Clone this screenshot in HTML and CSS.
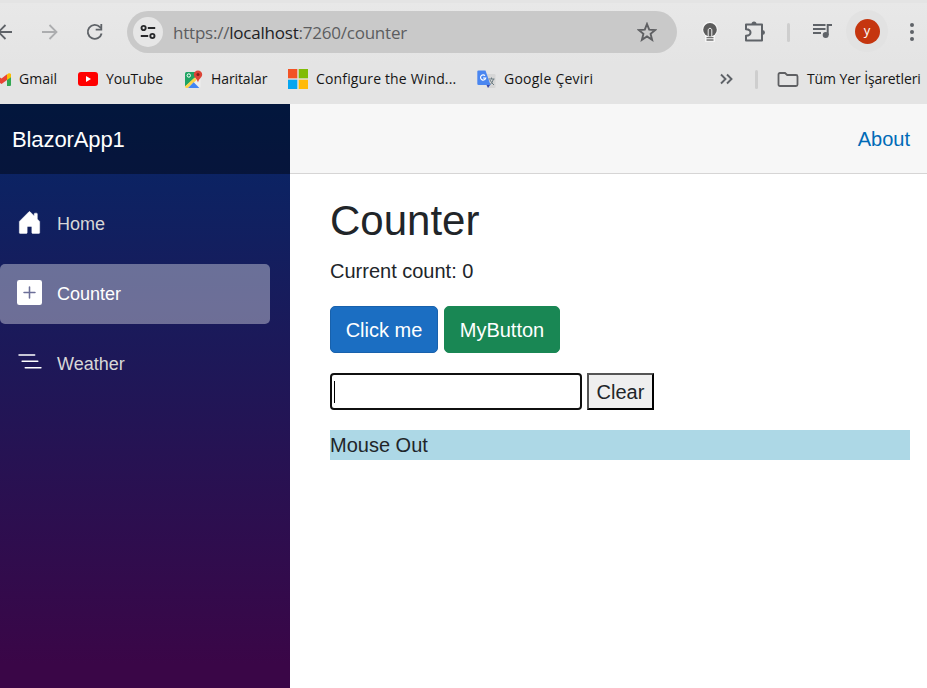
FILE: index.html
```html
<!DOCTYPE html>
<html lang="tr">
<head>
<meta charset="utf-8">
<title>Counter</title>
<link rel="stylesheet" href="styles.css">
</head>
<body>
<header class="browser">
  <div class="toolbar">
    <svg class="back" width="12" height="20" viewBox="0 0 12 20" fill="none" stroke="#5f6368" stroke-width="1.8"><path d="M12 10H-1M5.500 3L-1.500 10l7 7"/></svg>
    <svg class="forward" width="18" height="20" viewBox="0 0 18 20" fill="none" stroke="#acadaf" stroke-width="1.8"><path d="M1 10h14.500M8.500 3l7 7-7 7"/></svg>
    <svg class="reload" width="18" height="18" viewBox="0 0 18 18"><path d="M15.600 10.500A7 7 0 1 1 14 4.200l1 1" fill="none" stroke="#5f6368" stroke-width="1.900"/><path d="M16.200 1v6.500H9.700V5.700h4.700V1z" fill="#5f6368"/></svg>
    <div class="address">
      <span class="site-info"><svg width="16" height="16" viewBox="0 0 16 16" fill="none" stroke="#27282a" stroke-width="1.900"><circle cx="3.600" cy="4" r="2.100"/><path d="M7.800 4h7.400M.8 12h7.400"/><circle cx="12.400" cy="12" r="2.100"/></svg></span>
      <span class="url">https://<b>localhost</b>:7260/counter</span>
      <svg class="star" width="20" height="20" viewBox="0 0 20 20"><path d="M10 2l2.200 5.600 6 .4-4.600 3.900 1.500 5.900L10 14.500l-5.100 3.300 1.500-5.900L1.800 8l6-.4z" fill="none" stroke="#5f6063" stroke-width="1.900"/></svg>
    </div>
    <svg class="bulb" width="18" height="22" viewBox="0 0 18 22"><path d="M9 1.500a7 7 0 0 0-4.200 12.600v6h8.400v-6A7 7 0 0 0 9 1.500z" fill="#f7f7f7" stroke="#f7f7f7" stroke-width="1.500"/><circle cx="9" cy="8.700" r="6.800" fill="#5c5c5c"/><path d="M7.200 15V8.500Q9 5.500 10.800 8.500V15" fill="none" stroke="#f2f2f2"/><path d="M5.500 16.700h7M5.500 19h7" stroke="#737373" stroke-width="1.300"/></svg>
    <svg class="puzzle" width="22" height="22" viewBox="0 0 22 22"><path d="M2 3.500h16v16H2v-4.700q4.500-.2 4.500-3.300T2 8.200z" fill="none" stroke="#5f6368" stroke-width="2" stroke-linejoin="round"/><path d="M7.500 3a2.500 2.500 0 0 1 5 0zM18.500 9a2.500 2.500 0 0 1 0 5z" fill="#5f6368"/></svg>
    <i class="divider toolbar-divider"></i>
    <svg class="queue" width="20" height="18" viewBox="0 0 20 18"><path d="M0 3h12.500M0 7h12.500M0 11h8" stroke="#5f6368" stroke-width="1.900"/><path d="M14.700 13V3H19" fill="none" stroke="#5f6368" stroke-width="2"/><circle cx="12.700" cy="13" r="3" fill="#5f6368"/></svg>
    <span class="profile"><span class="avatar">y</span></span>
    <svg class="more" width="6" height="20" viewBox="0 0 6 20" fill="#5f6368"><circle cx="3" cy="3" r="2"/><circle cx="3" cy="10" r="2"/><circle cx="3" cy="17" r="2"/></svg>
  </div>
  <nav class="bookmarks">
    <a class="bookmark gmail"><svg width="11" height="15" viewBox="0 0 11 15"><path d="M-6 1.500L1.500 6.500 7 2.300V8L1.500 12-6 7z" fill="#ea4335"/><path d="M7 5v9h3q1 0 1-1V4z" fill="#34a853"/><path d="M7 8V2.600Q9 .2 11 2V5.200z" fill="#fbbc04"/></svg><span>Gmail</span></a>
    <a class="bookmark youtube"><svg width="20" height="14" viewBox="0 0 20 14"><rect width="20" height="14" rx="3" fill="#f00"/><path d="M8 4v6l5-3z" fill="#fff"/></svg><span>YouTube</span></a>
    <a class="bookmark maps"><svg width="19" height="19" viewBox="0 0 19 19"><path d="M2 2H12l4.500 6v8.500q0 1.500-1.500 1.500H2.500Q1 18 1 16.500v-13Q1 2 2 2z" fill="#eee"/><path d="M2.500 2H11v6L1 16.500v-13Q1 2 2.500 2z" fill="#1fa463"/><path d="M1 16.500L10.500 7.500l2.300 2.200L4 18H2.500Q1 18 1 16.500z" fill="#fdd44b"/><path d="M4 18L9.700 12.300 15.400 18z" fill="#4285f4"/><circle cx="4.800" cy="5.500" r="1.700" fill="none" stroke="#fff"/><path d="M14 .4a4.200 4.200 0 0 0-4.200 4.200c0 3 3.500 4 4.200 8 .7-4 4.200-5 4.200-8A4.200 4.200 0 0 0 14 .4z" fill="#dc4437"/><circle cx="14" cy="4.600" r="1.500" fill="#7e231b"/></svg><span>Haritalar</span></a>
    <a class="bookmark windows"><svg width="20" height="20" viewBox="0 0 20 20"><path d="M0 0h9.300v9.300H0z" fill="#f35325"/><path d="M10.700 0H20v9.300h-9.300z" fill="#81bc06"/><path d="M0 10.700h9.300V20H0z" fill="#05a6f0"/><path d="M10.700 10.700H20V20h-9.300z" fill="#ffba08"/></svg><span>Configure the Wind...</span></a>
    <a class="bookmark translate"><svg width="19" height="19" viewBox="0 0 19 19"><path d="M7 4h10.200q1.300 0 1.300 1.300v11.400q0 1.300-1.300 1.300H11z" fill="#d6d6d6"/><path d="M11.500 9h6M14.500 7.500V9m2 0q-1 4-4 6m.5-5q1.500 3 4 5" fill="none" stroke="#6c7c82"/><path d="M9.500 15h3.600L11 18z" fill="#3749ab"/><path d="M1.500.5h7l5 14.500h-12Q.3 15 .3 13.700v-12Q.3.5 1.500.5z" fill="#4a86f0"/><path d="M8 5.600A2.600 2.600 0 1 0 8.700 8H6" fill="none" stroke="#fff" stroke-width="1.200"/></svg><span>Google Çeviri</span></a>
    <svg class="overflow" width="13" height="12" viewBox="0 0 13 12" fill="none" stroke="#5f6368" stroke-width="1.900"><path d="M1 1.500L5.500 6 1 10.500M7 1.500L11.500 6 7 10.500"/></svg>
    <i class="divider"></i>
    <a class="bookmark all"><svg width="22" height="17" viewBox="0 0 22 17"><path d="M3 2h5l2.200 2H19q1.500 0 1.500 1.500v8Q20.500 15 19 15H3q-1.500 0-1.500-1.500v-10Q1.500 2 3 2z" fill="none" stroke="#5f6063" stroke-width="1.800"/></svg><span>Tüm Yer İşaretleri</span></a>
  </nav>
</header>
<div class="page">
  <aside class="sidebar">
    <div class="brand">BlazorApp1</div>
    <nav class="menu">
      <a class="item"><svg width="25" height="25" viewBox="0 0 16 16" fill="#fff"><path d="M6.500 14.500v-3.505c0-.245.25-.495.5-.495h2c.25 0 .5.250.5.500v3.500a.5.500 0 0 0 .5.500h4a.5.500 0 0 0 .5-.5v-7a.5.500 0 0 0-.146-.354L13 5.793V2.500a.5.500 0 0 0-.5-.5h-1a.5.500 0 0 0-.5.500v1.293L8.354 1.146a.5.500 0 0 0-.708 0l-6 6A.5.500 0 0 0 1.500 7.500v7a.5.500 0 0 0 .5.500h4a.5.500 0 0 0 .5-.5Z" stroke="#fff" stroke-width=".3"/></svg><span>Home</span></a>
      <a class="item active"><svg width="25" height="25" viewBox="0 0 16 16" fill="#fff"><path d="M1.500 0A1.500 1.500 0 0 0 0 1.500v13A1.500 1.500 0 0 0 1.500 16h13a1.500 1.500 0 0 0 1.500-1.500v-13A1.500 1.500 0 0 0 14.500 0h-13zm7 4.500v3h3a.5.500 0 0 1 0 1h-3v3a.5.500 0 0 1-1 0v-3h-3a.5.500 0 0 1 0-1h3v-3a.5.500 0 0 1 1 0z"/></svg><span>Counter</span></a>
      <a class="item"><svg width="25" height="25" viewBox="0 0 16 16" fill="none" stroke="#fff" stroke-linecap="round"><path d="M1.300 3.200h10M3.300 7.200h10M5.300 11.300h10"/></svg><span>Weather</span></a>
    </nav>
  </aside>
  <main>
    <div class="top-row"><a>About</a></div>
    <article>
      <h1>Counter</h1>
      <p>Current count: 0</p>
      <div class="buttons"><button class="btn primary">Click me</button><button class="btn success">MyButton</button></div>
      <div class="entry"><div class="field"><i class="caret"></i></div><button class="clear">Clear</button></div>
      <div class="hover-box">Mouse Out</div>
    </article>
  </main>
</div>
</body>
</html>
```

FILE: styles.css
```css
* { box-sizing: border-box; }
html, body { margin: 0; height: 100%; overflow: hidden; }
body { display: flex; flex-direction: column; font: 20px/30px "Liberation Sans", Arial, sans-serif; color: #212529; background: #fff; }
svg { display: block; flex: none; }
button { font: inherit; margin: 0; }

.browser { flex: none; height: 104px; background: #e4e4e4; font-family: "Open Sans", "Noto Sans", sans-serif; white-space: nowrap; overflow: hidden; }
.toolbar { display: flex; align-items: center; height: 64px; background: linear-gradient(#e4e4e4 0 3px, #e8e8e8 3px, #e4e4e4); }
.forward { margin-left: 29px; }
.reload { margin-left: 27px; }
.address { display: flex; align-items: center; flex: none; width: 550px; height: 42px; margin-left: 23px; padding: 0 20px 0 6px; border-radius: 21px; background: #c9c9c9; }
.site-info { display: grid; place-items: center; width: 30px; height: 30px; border-radius: 50%; background: #e6e6e6; }
.url { margin-left: 10px; padding-top: 1px; font-size: 17px; letter-spacing: -.22px; color: #5c5d60; }
.url b { font-weight: 400; color: #202124; }
.star { margin-left: auto; }
.bulb { margin-left: 23.500px; }
.puzzle { margin-left: 25.500px; }
.divider { flex: none; width: 3px; height: 19px; border-radius: 2px; background: #cecece; }
.toolbar-divider { margin-left: 21px; }
.queue { margin-left: 23px; margin-bottom: 2px; }
.profile { display: grid; place-items: center; flex: none; width: 42px; height: 42px; margin: 0 0 2px 13px; border-radius: 50%; background: #e2e2e2; }
.avatar { width: 25px; height: 25px; border-radius: 50%; background: #c5360f; color: #fff; font-size: 13px; line-height: 22px; text-align: center; }
.more { margin-left: 21px; }
.bookmarks { display: flex; align-items: center; height: 30px; font-size: 14px; line-height: 20px; color: #161616; }
.bookmark { display: flex; align-items: center; flex: none; }
.gmail { width: 78px; gap: 8px; }
.youtube { width: 106px; gap: 8px; letter-spacing: -.08px; }
.maps { width: 104px; gap: 8px; letter-spacing: -.1px; }
.windows { width: 189px; gap: 8px; letter-spacing: .15px; }
.translate { width: 243px; gap: 8px; letter-spacing: .25px; }
.overflow { margin-right: 22px; }
.all { margin-left: 19px; gap: 8px; letter-spacing: -.1px; }

.page { display: flex; flex: 1; min-height: 0; }
.sidebar { flex: none; width: 290px; background: linear-gradient(180deg, #052767 0, #3a0647 560px); }
.brand { height: 70px; padding: 1px 0 0 12px; background: rgba(0, 0, 0, .4); color: #fff; font-size: 22px; letter-spacing: -.1px; line-height: 70px; }
.menu { display: flex; flex-direction: column; gap: 10px; padding: 20px 20px 0 0; font-size: 18px; }
.item { display: flex; align-items: center; height: 60px; padding-left: 17px; gap: 15px; border-radius: 5px; color: #d7d7d7; }
.item svg { margin-bottom: 3px; }
.active { background: rgba(255, 255, 255, .37); color: #fff; }
main { flex: 1; min-width: 0; }
.top-row { display: flex; align-items: center; justify-content: flex-end; height: 70px; padding-right: 17px; border-bottom: 1px solid #d6d5d5; background: #f7f7f7; color: #006bb7; }
article { padding: 22px 17px 0 40px; }
h1 { margin: 0 0 10px; font-size: 42px; font-weight: 400; line-height: 50px; }
p { margin: 0 0 20px; }
.buttons { display: flex; gap: 6px; margin-bottom: 20px; }
.btn { height: 47px; padding: 0; border: 1px solid; border-radius: 5px; color: #fff; }
.primary { width: 108px; background: #1b6ec2; border-color: #1861ac; }
.success { width: 116px; background: #198754; border-color: #198754; }
.entry { display: flex; gap: 5px; margin-bottom: 20px; }
.field { width: 252px; height: 37px; padding: 6px 2px; border: 2px solid #101010; border-radius: 4px; background: #fff; }
.caret { display: block; width: 1px; height: 22px; background: #000; }
.clear { width: 67px; height: 37px; padding: 0; border: 2px solid; border-color: #555 #000 #000 #555; background: #efefef; color: #212529; }
.hover-box { height: 30px; background: #add8e6; }
```
